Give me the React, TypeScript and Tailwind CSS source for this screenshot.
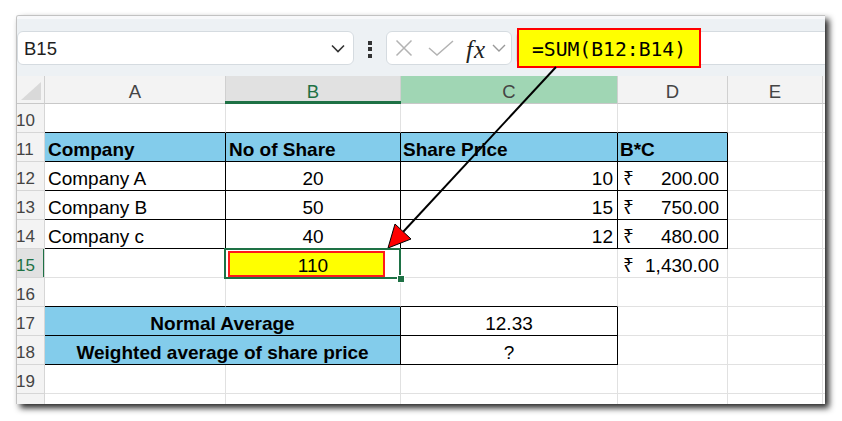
import React from "react";

type CellProps = { className?: string; children?: React.ReactNode };

function Cell({ className = "", children }: CellProps) {
  return (
    <div
      className={`relative h-[29px] border-r border-b flex items-end leading-[22px] text-[19px] text-black whitespace-nowrap ${className}`}
    >
      {children}
    </div>
  );
}

function RowHead({ n, selected = false }: { n: number; selected?: boolean }) {
  return (
    <div
      className={`relative h-[29px] border-r border-b border-r-[#d6d6d6] border-b-[#d6d6d6] flex items-end pb-[1px] leading-[20px] text-[17px] overflow-hidden ${
        selected ? "bg-[#e1e1e1] text-[#1e7145]" : "bg-[#f3f3f3] text-[#444]"
      }`}
    >
      <span className="-ml-[1px]">{n}</span>
      {selected && <div className="absolute right-[-1px] top-0 bottom-[-1px] w-[2px] bg-[#1e7145]" />}
    </div>
  );
}

const G = "border-r-[#e1e1e1] border-b-[#e1e1e1]";
const GB = "border-r-[#e1e1e1] border-b-black";
const BB = "border-r-black border-b-black";
const HEAD = "bg-[#83cceb] font-bold text-[18.5px]";

function Filler() {
  return <div className="h-[29px] border-b border-b-[#e1e1e1]" />;
}

function Rupee({ value }: { value: string }) {
  return (
    <div className="flex w-full justify-between pl-[5px] pr-[8px]">
      <span>₹</span>
      <span>{value}</span>
    </div>
  );
}

export default function App() {
  return (
    <div className="relative w-[842px] h-[421px] overflow-hidden bg-white font-['Liberation_Sans','Noto_Sans',sans-serif]">
      <div className="pt-[15px] pl-[16px]">
        <div className="w-[809px] h-[389px] overflow-hidden border-l border-t border-[#c2c2c2] rounded-tl-[3px] bg-white shadow-[4px_4px_6px_rgba(0,0,0,0.85)] flex flex-col">
          {/* Formula bar */}
          <div className="h-[60px] shrink-0 bg-[#edf1f4] border-t-[3px] border-t-[#f7f8fa] pt-[12px] flex items-start">
            <div className="w-[337px] h-[34px] bg-white border border-[#d5dbe0] rounded-[6px] flex items-center justify-between pl-[6px] pr-[8px]">
              <span className="text-[18.5px] text-[#1f1f1f] pt-[2px]">B15</span>
              <svg width="14" height="9" viewBox="0 0 14 9">
                <polyline points="1,1.5 7,7.5 13,1.5" fill="none" stroke="#333" strokeWidth="1.6" />
              </svg>
            </div>
            <div className="w-[32px] h-[34px] flex flex-col items-center justify-center gap-[2.5px] pt-[2px]">
              <div className="w-[4px] h-[4px] bg-[#333]" />
              <div className="w-[4px] h-[4px] bg-[#333]" />
              <div className="w-[4px] h-[4px] bg-[#333]" />
            </div>
            <div className="w-[126px] h-[34px] bg-white border border-[#d5dbe0] rounded-[6px] flex items-center pl-[8px]">
              <svg width="18" height="18" viewBox="0 0 18 18">
                <path d="M1.5 1.5 L16.5 16.5 M16.5 1.5 L1.5 16.5" stroke="#b3b3b3" strokeWidth="1.5" />
              </svg>
              <svg width="26" height="16" viewBox="0 0 26 16" className="ml-[15px]">
                <polyline points="1,8 9,15 25,1" fill="none" stroke="#b3b3b3" strokeWidth="1.5" />
              </svg>
              <span className="ml-[12px] font-['Liberation_Serif',serif] italic text-[25px] leading-[25px] text-[#222] pt-[3px] tracking-[1px]">
                fx
              </span>
              <svg width="14" height="8" viewBox="0 0 14 8" className="ml-[6px]">
                <polyline points="1,1 7,7 13,1" fill="none" stroke="#999" strokeWidth="1.4" />
              </svg>
            </div>
            <div className="flex-1 h-[34px] ml-[4px] bg-white border-l border-t border-b border-[#d5dbe0] rounded-l-[6px]" />
          </div>

          {/* Grid */}
          <div className="grid grid-cols-[28px_181px_175px_217px_110px_95px_2px]">
            {/* Column headers */}
            <div className="relative h-[28px] bg-[#f3f3f3] border-r border-b border-r-[#d0d0d0] border-b-[#c8c8c8]">
              <svg width="27" height="27" viewBox="0 0 27 27" className="absolute left-0 top-0">
                <polygon points="24,6 24,24 4,24" fill="#d9d9d9" />
              </svg>
            </div>
            <div className="h-[28px] bg-[#f3f3f3] border-r border-b border-r-[#d0d0d0] border-b-[#c8c8c8] flex items-end justify-center leading-[22px] text-[18.5px] text-[#444]">
              A
            </div>
            <div className="relative h-[28px] bg-[#e1e1e1] border-r border-b border-r-[#d0d0d0] border-b-[#c8c8c8] flex items-end justify-center leading-[22px] text-[18.5px] text-[#1e7145]">
              B
              <div className="absolute left-[-1px] right-[-1px] bottom-[-1px] h-[3px] bg-[#1e7145]" />
            </div>
            <div className="h-[28px] bg-[#a0d6b4] border-r border-b border-r-[#d0d0d0] border-b-[#c8c8c8] flex items-end justify-center leading-[22px] text-[18.5px] text-[#444]">
              C
            </div>
            <div className="h-[28px] bg-[#f3f3f3] border-r border-b border-r-[#d0d0d0] border-b-[#c8c8c8] flex items-end justify-center leading-[22px] text-[18.5px] text-[#444]">
              D
            </div>
            <div className="h-[28px] bg-[#f3f3f3] border-r border-b border-r-[#d0d0d0] border-b-[#c8c8c8] flex items-end justify-center leading-[22px] text-[18.5px] text-[#444]">
              E
            </div>
            <div className="h-[28px] bg-[#f3f3f3] border-b border-b-[#c8c8c8]" />

            {/* Row 10 */}
            <RowHead n={10} />
            <Cell className={GB} />
            <Cell className={GB} />
            <Cell className={GB} />
            <Cell className={GB} />
            <Cell className={G} />
            <Filler />

            {/* Row 11 */}
            <RowHead n={11} />
            <Cell className={`${BB} ${HEAD} pl-[3px]`}>Company</Cell>
            <Cell className={`${BB} ${HEAD} pl-[3px]`}>No of Share</Cell>
            <Cell className={`${BB} ${HEAD} pl-[2px]`}>Share Price</Cell>
            <Cell className={`${BB} ${HEAD} pl-[2px]`}>B*C</Cell>
            <Cell className={G} />
            <Filler />

            {/* Rows 12-14 */}
            {[
              ["12", "Company A", "20", "10", "200.00"],
              ["13", "Company B", "50", "15", "750.00"],
              ["14", "Company c", "40", "12", "480.00"],
            ].map((r) => (
              <React.Fragment key={r[0]}>
                <RowHead n={Number(r[0])} />
                <Cell className={`${BB} pl-[3px]`}>{r[1]}</Cell>
                <Cell className={`${BB} justify-center`}>{r[2]}</Cell>
                <Cell className={`${BB} justify-end pr-[4px]`}>{r[3]}</Cell>
                <Cell className={BB}>
                  <Rupee value={r[4]} />
                </Cell>
                <Cell className={G} />
                <Filler />
              </React.Fragment>
            ))}

            {/* Row 15 */}
            <RowHead n={15} selected />
            <Cell className={G} />
            <Cell className={`${G} justify-center z-10`}>
              <div className="absolute left-[2px] top-[2px] w-[157px] h-[26px] bg-[#ffff00] border-2 border-[#ff1a1a]" />
              <span className="relative">110</span>
              <div className="absolute left-[-2px] top-[-1px] right-[-1px] bottom-[-2px] border-2 border-[#1e7145]" />
              <div className="absolute right-[-5px] bottom-[-6px] w-[8px] h-[8px] bg-[#1e7145] border border-white" />
            </Cell>
            <Cell className={G} />
            <Cell className={G}>
              <Rupee value="1,430.00" />
            </Cell>
            <Cell className={G} />
            <Filler />

            {/* Row 16 */}
            <RowHead n={16} />
            <Cell className={GB} />
            <Cell className={GB} />
            <Cell className={GB} />
            <Cell className={G} />
            <Cell className={G} />
            <Filler />

            {/* Row 17 */}
            <RowHead n={17} />
            <Cell className={`${BB} ${HEAD} col-span-2 justify-center`}>Normal Average</Cell>
            <Cell className={`${BB} justify-center`}>12.33</Cell>
            <Cell className={G} />
            <Cell className={G} />
            <Filler />

            {/* Row 18 */}
            <RowHead n={18} />
            <Cell className={`${BB} ${HEAD} col-span-2 justify-center`}>Weighted average of share price</Cell>
            <Cell className={`${BB} justify-center`}>?</Cell>
            <Cell className={G} />
            <Cell className={G} />
            <Filler />

            {/* Row 19 */}
            <RowHead n={19} />
            <Cell className={G} />
            <Cell className={G} />
            <Cell className={G} />
            <Cell className={G} />
            <Cell className={G} />
            <Filler />

            {/* Row 20 */}
            <RowHead n={20} />
            <Cell className={G} />
            <Cell className={G} />
            <Cell className={G} />
            <Cell className={G} />
            <Cell className={G} />
            <Filler />
          </div>
        </div>
      </div>

      {/* Formula highlight overlay */}
      <div className="absolute left-[517px] top-[28px] w-[184px] h-[40px] bg-[#ffff00] border-2 border-[#ff0000] flex items-center justify-center pt-[4px] font-['DejaVu_Sans_Mono',monospace] text-[19.7px] text-black">
        =SUM(B12:B14)
      </div>

      {/* Arrow */}
      <svg className="absolute left-0 top-0 pointer-events-none" width="842" height="421" viewBox="0 0 842 421">
        <line x1="556" y1="67" x2="403" y2="232" stroke="#000" strokeWidth="2" />
        <polygon points="388,248 411,239 395,224" fill="#ff0000" stroke="#000" strokeWidth="1" strokeLinejoin="miter" />
      </svg>
    </div>
  );
}
